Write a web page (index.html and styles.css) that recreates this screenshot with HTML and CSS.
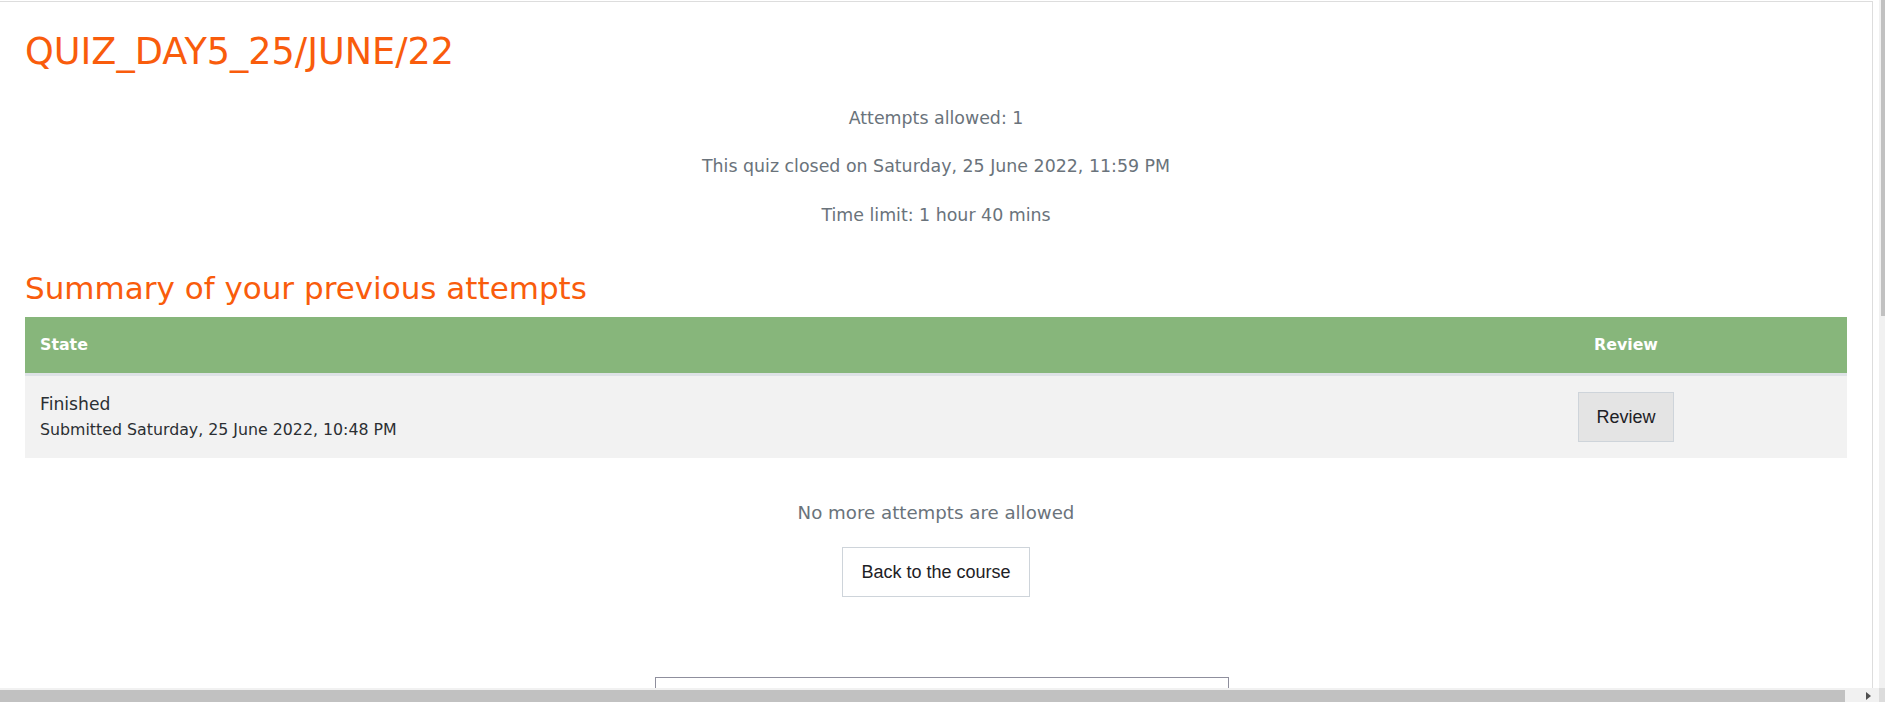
FILE: index.html
```html
<!DOCTYPE html>
<html lang="en">
<head>
<meta charset="utf-8">
<title>QUIZ_DAY5_25/JUNE/22</title>
<link rel="stylesheet" href="styles.css">
</head>
<body>
<div class="window">
  <div class="main">
    <div class="page">
      <h2 class="title">QUIZ_DAY5_25/JUNE/22</h2>
      <div class="info">
        <p>Attempts allowed: 1</p>
        <p>This quiz closed on Saturday, 25 June 2022, 11:59 PM</p>
        <p>Time limit: 1 hour 40 mins</p>
      </div>
      <h3 class="summary">Summary of your previous attempts</h3>
      <div class="attempts">
        <div class="thead">
          <div class="th th-state">State</div>
          <div class="th th-review">Review</div>
        </div>
        <div class="trow">
          <div class="td td-state">
            <div class="state">Finished</div>
            <div class="submitted">Submitted Saturday, 25 June 2022, 10:48 PM</div>
          </div>
          <div class="td td-review">
            <button class="btn btn-review" type="button">Review</button>
          </div>
        </div>
      </div>
      <p class="nomore">No more attempts are allowed</p>
      <div class="back-wrap">
        <button class="btn btn-back" type="button">Back to the course</button>
      </div>
      <div class="jump-wrap"><div class="jump"></div></div>
    </div>
  </div>
  <div class="vscroll"><div class="vthumb"></div></div>
  <div class="hscroll">
    <div class="hthumb"></div>
    <div class="htrack"><span class="harrow"></span></div>
  </div>
  <div class="corner"></div>
</div>
</body>
</html>
```

FILE: styles.css
```css
html, body {
  margin: 0;
  padding: 0;
  background: #ffffff;
  overflow: hidden;
}

.window {
  width: 1885px;
  height: 702px;
  display: grid;
  grid-template-columns: 1879px 6px;
  grid-template-rows: 688px 14px;
}

.main {
  overflow: hidden;
  background: #ffffff;
}

.page {
  box-sizing: border-box;
  width: 1873px;
  margin-top: 1px;
  border-top: 1px solid #dddddd;
  border-right: 1px solid #dddddd;
  padding: 0 25px 40px 25px;
  font-family: "DejaVu Sans", sans-serif;
}

.title {
  margin: 27.5px 0 0 0;
  font-size: 36.6px;
  line-height: 44px;
  font-weight: normal;
  color: #f95c0c;
}

.info {
  margin-top: 30.6px;
  display: flex;
  flex-direction: column;
  gap: 20.35px;
  text-align: center;
}

.info p {
  margin: 0;
  font-size: 17.4px;
  line-height: 28px;
  color: #6a737b;
}

.summary {
  margin: 39.8px 0 0 0;
  font-size: 31px;
  line-height: 38px;
  font-weight: normal;
  color: #f95c0c;
}

.attempts {
  margin-top: 10.4px;
}

.thead {
  display: grid;
  grid-template-columns: 1fr 442px;
  height: 56px;
  background: #87b67b;
  border-bottom: 3px solid #dee2e6;
}

.th {
  display: flex;
  align-items: center;
  font-size: 15.8px;
  font-weight: bold;
  color: #ffffff;
}

.th-state {
  padding-left: 15px;
}

.th-review {
  justify-content: center;
}

.trow {
  display: grid;
  grid-template-columns: 1fr 442px;
  height: 81.7px;
  background: #f2f2f2;
}

.td-state {
  padding: 16.3px 0 0 15px;
  color: #2b2f33;
}

.state {
  font-size: 17.2px;
  line-height: 25px;
}

.submitted {
  font-size: 15.8px;
  line-height: 26px;
}

.td-review {
  display: flex;
  align-items: center;
  justify-content: center;
}

.btn {
  font-family: "Liberation Sans", Arial, sans-serif;
  font-size: 18px;
  line-height: 22px;
  color: #1d2125;
  border: 1px solid #ced4da;
  border-radius: 0;
  margin: 0;
}

.btn-review {
  background: #e4e4e4;
  padding: 13px 17px;
}

.nomore {
  margin: 41.2px 0 0 0;
  text-align: center;
  font-size: 18.2px;
  line-height: 28px;
  color: #6a737b;
}

.back-wrap {
  margin-top: 20.4px;
  display: flex;
  justify-content: center;
}

.btn-back {
  background: #ffffff;
  padding: 13px 18px;
}

.jump-wrap {
  margin-top: 79.7px;
  display: flex;
  justify-content: center;
  padding-left: 12px;
}

.jump {
  width: 574px;
  height: 38px;
  box-sizing: border-box;
  border: 1px solid #8f8f9d;
  background: #ffffff;
}

.vscroll {
  background: #f1f1f1;
  padding-left: 2px;
}

.vthumb {
  height: 316px;
  background: #c1c1c1;
}

.hscroll {
  display: flex;
  background: #f1f1f1;
  padding-top: 2px;
  box-sizing: border-box;
}

.hthumb {
  width: 1845px;
  height: 12px;
  background: #c1c1c1;
}

.htrack {
  flex: 1;
  display: flex;
  align-items: center;
  justify-content: flex-end;
  padding-right: 8px;
}

.harrow {
  width: 0;
  height: 0;
  border-left: 5px solid #505050;
  border-top: 4px solid transparent;
  border-bottom: 4px solid transparent;
}

.corner {
  background: #dcdcdc;
}
```
